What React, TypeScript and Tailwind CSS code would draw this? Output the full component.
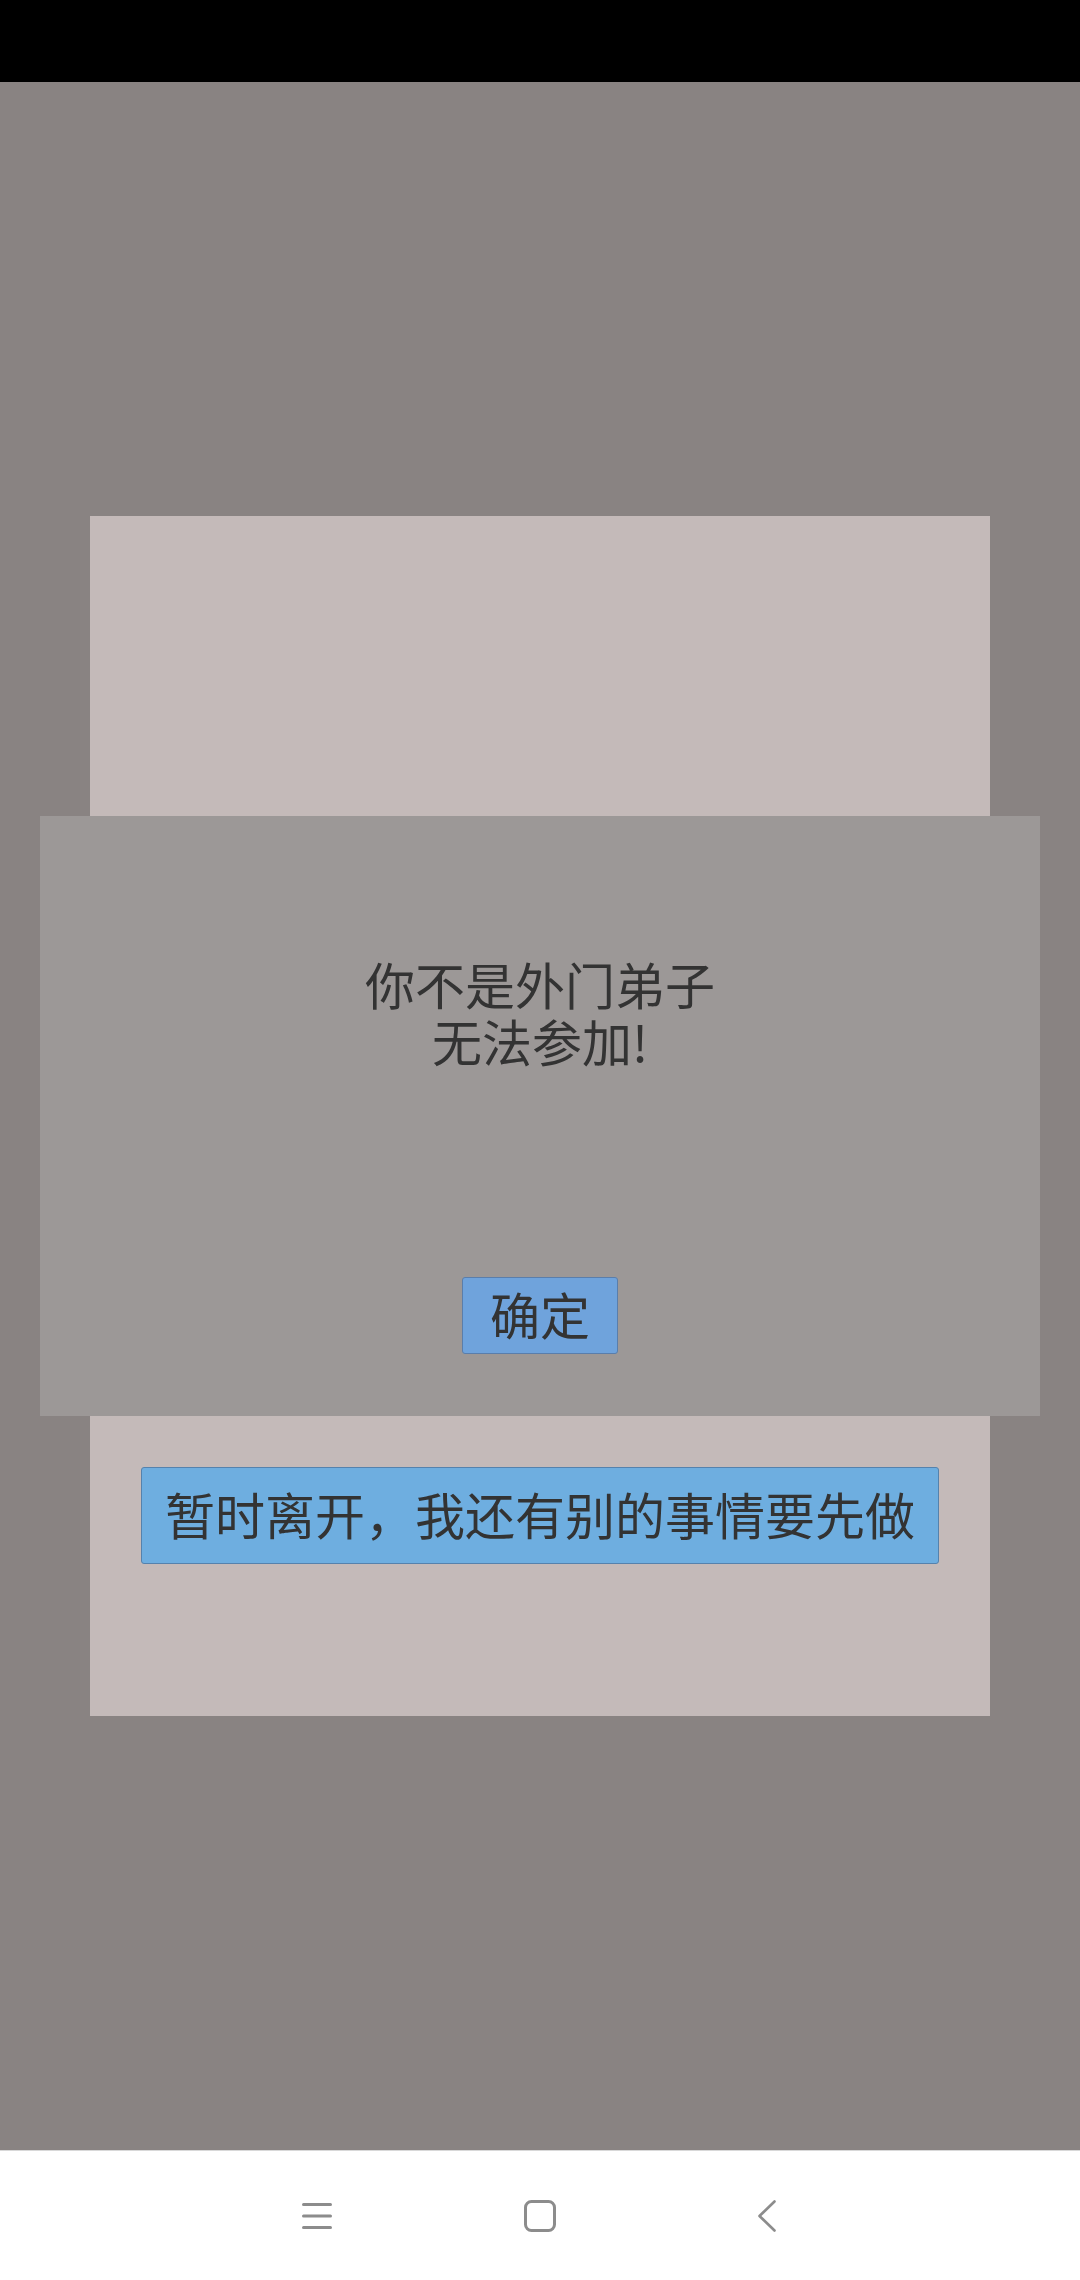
import React from "react";

export default function App() {
  const font = { fontFamily: '"Noto Sans CJK SC", "Noto Sans", sans-serif' };
  return (
    <div className="w-[1080px] h-[2280px] flex flex-col bg-[#898382]" style={font}>
      <div className="h-[82px] bg-black shrink-0" />
      <div className="flex-1 flex items-center justify-center relative">
        <div className="w-[900px] h-[1200px] bg-[#c4bab9] flex flex-col items-center">
          <div className="h-[951px]" />
          <button className="w-[798px] h-[97px] pb-[6px] bg-[#6eaee0] border border-[#5582ad] rounded-[3px] text-[50px] leading-none text-[#333333] flex items-center justify-center">
            暂时离开，我还有别的事情要先做
          </button>
        </div>
        <div className="absolute left-[40px] top-[734px] w-[1000px] h-[600px] bg-[#9c9897] flex flex-col items-center">
          <div className="mt-[139px] text-[50px] leading-[57px] text-[#333333] text-center">
            你不是外门弟子
            <br />
            无法参加!
          </div>
          <button className="mt-[208px] w-[156px] h-[77px] pb-[6px] bg-[#6fa3dc] border border-[#5a7eab] rounded-[3px] text-[50px] leading-none text-[#333333] flex items-center justify-center">
            确定
          </button>
        </div>
      </div>
      <div className="h-[130px] bg-white border-t border-[#d8d8d8] shrink-0 flex items-center">
        <div className="ml-[302px] flex items-center">
          <svg width="30" height="26" viewBox="0 0 30 26">
            <g stroke="#8c8c8c" strokeWidth="3" strokeLinecap="round">
              <line x1="1.5" y1="1.5" x2="28.5" y2="1.5" />
              <line x1="1.5" y1="13" x2="28.5" y2="13" />
              <line x1="1.5" y1="24.5" x2="28.5" y2="24.5" />
            </g>
          </svg>
          <svg width="32" height="32" viewBox="0 0 32 32" className="ml-[192px]">
            <rect x="1.5" y="1.5" width="29" height="29" rx="6" fill="none" stroke="#8c8c8c" strokeWidth="3" />
          </svg>
          <svg width="18" height="32" viewBox="0 0 18 32" className="ml-[202px]">
            <polyline points="16.5,1.5 1.5,16 16.5,30.5" fill="none" stroke="#8c8c8c" strokeWidth="2.6" strokeLinecap="round" strokeLinejoin="round" />
          </svg>
        </div>
      </div>
    </div>
  );
}
